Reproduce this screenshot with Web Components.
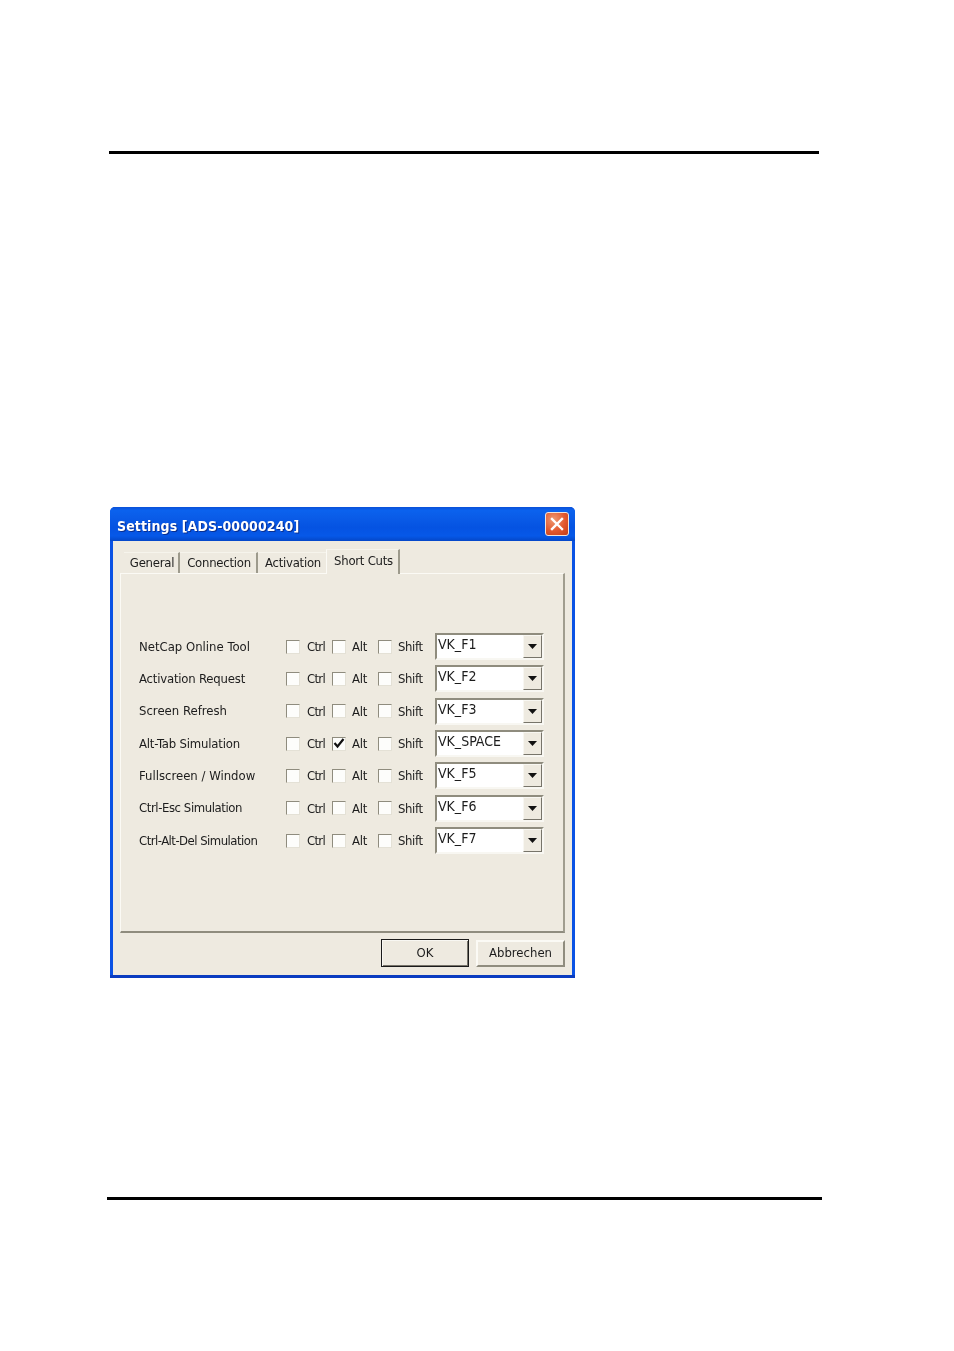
<!DOCTYPE html>
<html>
<head>
<meta charset="utf-8">
<title>Settings</title>
<style>
    html, body { margin: 0; padding: 0; background: #fff; }
    body { width: 954px; height: 1351px; overflow: hidden; font-family: "DejaVu Sans", "Liberation Sans", sans-serif; }
    #top-rule { display: block; height: 3px; width: 710px; margin: 151px 0 0 109px; background: #000; }
    #bottom-rule { display: block; height: 3px; width: 715px; margin: 219px 0 0 107px; background: #000; }
    xp-window { margin: 353px 0 0 110px; }
</style>
</head>
<body>
<div id="top-rule"></div>

<xp-window caption="Settings [ADS-00000240]">
    <xp-tabs>
        <xp-shortcut label="NetCap Online Tool" key="VK_F1"></xp-shortcut>
        <xp-shortcut label="Activation Request" key="VK_F2" style="--label-spacing:-.2px"></xp-shortcut>
        <xp-shortcut label="Screen Refresh" key="VK_F3"></xp-shortcut>
        <xp-shortcut label="Alt-Tab Simulation" key="VK_SPACE" alt style="--label-spacing:-.2px"></xp-shortcut>
        <xp-shortcut label="Fullscreen / Window" key="VK_F5"></xp-shortcut>
        <xp-shortcut label="Ctrl-Esc Simulation" key="VK_F6" style="--label-spacing:-.42px"></xp-shortcut>
        <xp-shortcut label="Ctrl-Alt-Del Simulation" key="VK_F7" style="--label-spacing:-.52px"></xp-shortcut>
    </xp-tabs>
    <xp-button slot="buttons" default style="width:88px">OK</xp-button>
    <xp-button slot="buttons">Abbrechen</xp-button>
</xp-window>

<div id="bottom-rule"></div>

<script>
const UI_FONT = `"DejaVu Sans", "Liberation Sans", sans-serif`;

class XpWindow extends HTMLElement {
    constructor () {
        super ();
        this.attachShadow ({mode: 'open'});
        this.shadowRoot.innerHTML = `
<style>
    :host {
        display: block;
        width: 465px;
        height: 471px;
        box-sizing: border-box;
        filter: blur(0.45px);
    }
    #frame {
        height: 100%;
        box-sizing: border-box;
        display: flex;
        flex-direction: column;
        background: #0a52e4;
        border-bottom: 3px solid #0a3cc0;
        border-radius: 5px 5px 0 0;
        overflow: hidden;
    }
    #title {
        height: 34px;
        flex: none;
        display: flex;
        align-items: center;
        justify-content: space-between;
        padding: 0 6px 0 7px;
        background: linear-gradient(#0a50d8 0, #0b62ee 10%, #0a5ce8 30%, #0553e2 60%, #0658e8 85%, #0447c8 100%);
    }
    #caption {
        font: bold 14px ${UI_FONT};
        font-stretch: condensed;
        letter-spacing: .1px;
        color: #fff;
        text-shadow: 1px 1px 0 #0a2f90;
        white-space: nowrap;
        margin-top: 4px;
    }
    #close {
        width: 24px;
        height: 24px;
        box-sizing: border-box;
        border: 1px solid #f0e4dc;
        border-radius: 3px;
        background: radial-gradient(circle at 35% 30%, #ef9a74 0, #e2582e 55%, #c23c18 100%);
        display: flex;
        align-items: center;
        justify-content: center;
    }
    #client {
        flex: 1;
        margin: 0 3px;
        background: #eeeae0;
        padding: 8px 7px 0 7px;
        display: flex;
        flex-direction: column;
    }
    #buttons {
        display: flex;
        justify-content: flex-end;
        align-items: flex-end;
        height: 27px;
        gap: 7px;
        margin-top: 7px;
    }
</style>
<div id="frame">
    <div id="title">
        <span id="caption"></span>
        <span id="close">
            <svg width="14" height="14" viewBox="0 0 14 14"><path d="M2 2 L12 12 M12 2 L2 12" stroke="#fff" stroke-width="2.4" stroke-linecap="square"/></svg>
        </span>
    </div>
    <div id="client">
        <slot></slot>
        <div id="buttons"><slot name="buttons"></slot></div>
    </div>
</div>`;
    }

    connectedCallback () {
        this.shadowRoot.querySelector ("#caption").textContent = this.getAttribute ("caption");
    }
}

class XpTabs extends HTMLElement {
    constructor () {
        super ();
        this.attachShadow ({mode: 'open'});
        this.shadowRoot.innerHTML = `
<style>
    :host {
        display: block;
        font: 13px ${UI_FONT};
        font-stretch: condensed;
        color: #1c1c1c;
    }
    #strip {
        height: 24px;
        display: flex;
        align-items: flex-end;
        padding-left: 4px;
        position: relative;
        z-index: 1;
        letter-spacing: -.25px;
    }
    .tab {
        box-sizing: border-box;
        height: 21px;
        padding-left: 2px;
        border-top: 1px solid #f6f4ec;
        border-right: 2px solid #9d9a8c;
        line-height: 20px;
        white-space: nowrap;
        text-align: center;
    }
    .tab.plain { border-right: 0; }
    .tab.focused {
        height: 25px;
        margin-bottom: -1px;
        background: #eeeae0;
        border-left: 1px solid #fbfaf5;
        line-height: 22px;
    }
    #panel {
        height: 360px;
        box-sizing: border-box;
        border-style: solid;
        border-width: 1px 2px 2px 1px;
        border-color: #fbfaf5 #a09d8f #8f8c7e #fbfaf5;
        padding: 59px 0 0 18px;
        display: flex;
        flex-direction: column;
        gap: 5.35px;
    }
</style>
<div id="strip">
    <div class="tab" style="width:56px">General</div>
    <div class="tab" style="width:78px">Connection</div>
    <div class="tab plain" style="width:68px">Activation</div>
    <div class="tab focused" style="width:74px">Short Cuts</div>
</div>
<div id="panel"><slot></slot></div>`;
    }
}

class XpShortcut extends HTMLElement {
    constructor () {
        super ();
        this.attachShadow ({mode: 'open'});
        this.shadowRoot.innerHTML = `
<style>
    :host {
        display: flex;
        align-items: center;
        height: 27px;
    }
    #label {
        width: 147px;
        flex: none;
        white-space: nowrap;
        margin-top: -1px;
        letter-spacing: var(--label-spacing, 0);
    }
    #shift { margin-right: 12px; }
</style>
<span id="label"></span>
<xp-check id="ctrl" style="width:46px;letter-spacing:-.7px">Ctrl</xp-check>
<xp-check id="alt" style="width:46px;letter-spacing:-.3px;--gap:6px">Alt</xp-check>
<xp-check id="shift" style="width:45px;letter-spacing:-.4px;--gap:6px">Shift</xp-check>
<xp-combo></xp-combo>`;
    }

    connectedCallback () {
        this.shadowRoot.querySelector ("#label").textContent = this.getAttribute ("label");
        this.shadowRoot.querySelector ("xp-combo").setAttribute ("value", this.getAttribute ("key"));
        if (this.hasAttribute ("alt")) {
            this.shadowRoot.querySelector ("#alt").setAttribute ("checked", "");
        }
    }
}

class XpCheck extends HTMLElement {
    constructor () {
        super ();
        this.attachShadow ({mode: 'open'});
        this.shadowRoot.innerHTML = `
<style>
    :host {
        display: flex;
        align-items: center;
        flex: none;
        white-space: nowrap;
    }
    #box {
        width: 14px;
        height: 14px;
        flex: none;
        box-sizing: border-box;
        border: 1px solid;
        border-color: #8f8c7e #e4e1d6 #e4e1d6 #8f8c7e;
        background: #fdfdfb;
        margin-right: var(--gap, 7px);
        display: flex;
    }
    svg { display: none; }
    :host([checked]) svg { display: block; }
</style>
<span id="box"><svg width="12" height="12" viewBox="0 0 12 12"><path d="M1.5 5 L4.5 8.5 L10.5 1" fill="none" stroke="#111" stroke-width="2.2"/></svg></span>
<slot></slot>`;
    }
}

class XpCombo extends HTMLElement {
    static get observedAttributes () { return ["value"]; }

    constructor () {
        super ();
        this.attachShadow ({mode: 'open'});
        this.shadowRoot.innerHTML = `
<style>
    :host {
        display: flex;
        width: 109px;
        height: 27px;
        flex: none;
        box-sizing: border-box;
        border: 2px solid;
        border-color: #8f8c7e #f8f7f2 #f8f7f2 #8f8c7e;
        background: #fff;
        justify-content: space-between;
    }
    #value { padding-left: 1px; font-size: 14px; line-height: 19px; white-space: nowrap; }
    #drop {
        width: 19px;
        flex: none;
        box-sizing: border-box;
        border: 1px solid;
        border-color: #f8f7f2 #77746a #77746a #f8f7f2;
        background: #eeeae0;
        display: flex;
        align-items: center;
        justify-content: center;
    }
    #drop svg { display: block; }
</style>
<span id="value"></span>
<span id="drop"><svg width="9" height="5" viewBox="0 0 9 5"><path d="M0 0 H9 L4.5 5 Z" fill="#111"/></svg></span>`;
    }

    attributeChangedCallback (name, oldValue, value) {
        this.shadowRoot.querySelector ("#value").textContent = value;
    }
}

class XpButton extends HTMLElement {
    constructor () {
        super ();
        this.attachShadow ({mode: 'open'});
        this.shadowRoot.innerHTML = `
<style>
    :host {
        display: flex;
        align-items: center;
        justify-content: center;
        width: 89px;
        height: 27px;
        box-sizing: border-box;
        padding-bottom: 2px;
        font: 13px ${UI_FONT};
        font-stretch: condensed;
        color: #1c1c1c;
        background: #eeeae0;
        border: 2px solid;
        border-color: #fbfaf5 #8f8c7e #8f8c7e #fbfaf5;
    }
    :host([default]) {
        height: 28px;
        border: 1px solid #1a1a1a;
        box-shadow: inset 1px 1px 0 #f8f7f2, inset -1px -1px 0 #77746a;
    }
</style>
<slot></slot>`;
    }
}

customElements.define ("xp-check", XpCheck);
customElements.define ("xp-combo", XpCombo);
customElements.define ("xp-shortcut", XpShortcut);
customElements.define ("xp-tabs", XpTabs);
customElements.define ("xp-button", XpButton);
customElements.define ("xp-window", XpWindow);
</script>
</body>
</html>
